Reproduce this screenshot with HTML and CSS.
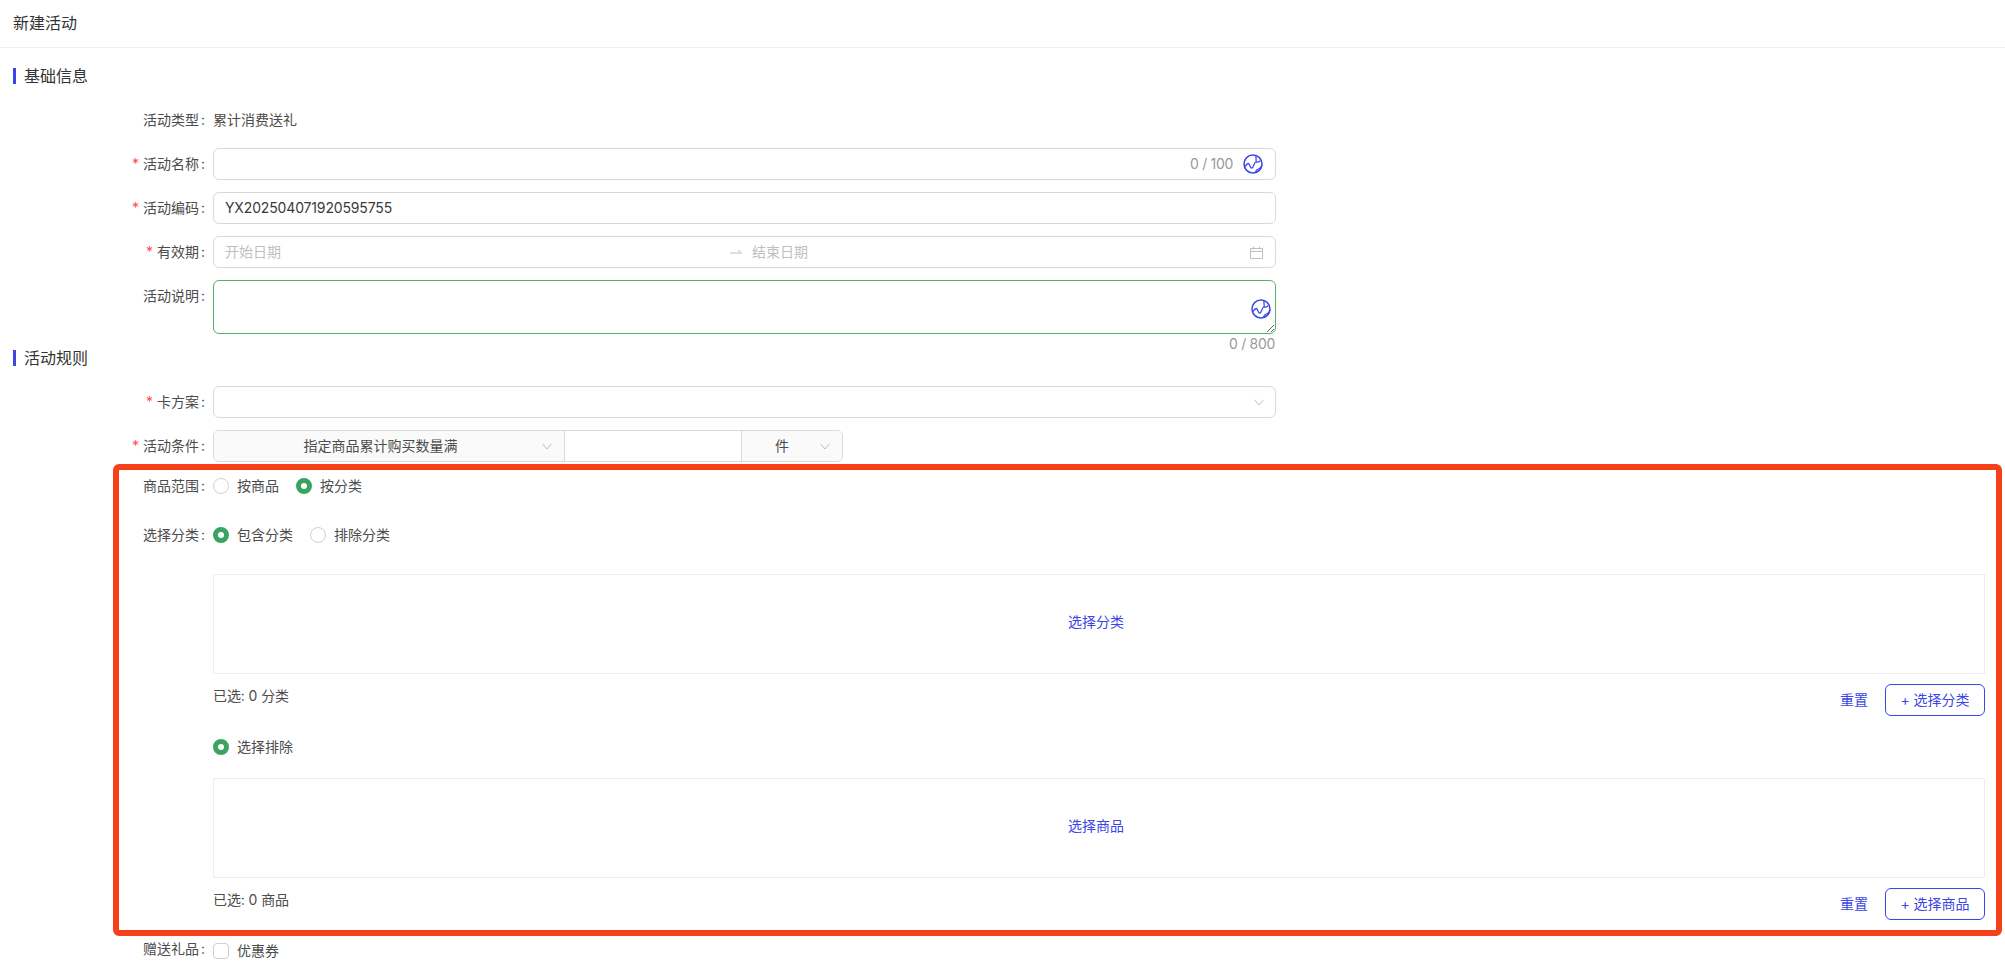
FILE: index.html
```html
<!DOCTYPE html>
<html lang="zh-CN">
<head>
<meta charset="utf-8">
<title>新建活动</title>
<link rel="stylesheet" href="styles.css">
</head>
<body>
<svg class="defs" width="0" height="0" aria-hidden="true">
  <symbol id="globe" viewBox="0 0 20 20">
    <circle cx="10" cy="10" r="9" fill="none" stroke="currentColor" stroke-width="1.5"/>
    <path d="M1.5 13C3 11 4 9.500 5.300 9.500c1.700 0 1.500 5 3.500 4.500 2.200-.5 1.700-5 3.900-6 1.300-1 -.2-4 .3-6.500M12.700 8c1.500.3 3.100 0 4.600-1.300" fill="none" stroke="currentColor" stroke-width="1.300"/>
    <path d="M12.800 18.600c-.3-2.100 1.200-3.100 2.700-3.600 1.500-.5 3-1.500 3.300-4" fill="none" stroke="currentColor" stroke-width="1.300"/>
  </symbol>
  <symbol id="chev" viewBox="0 0 10 7">
    <path d="M.6.8 5 6 9.400.8" fill="none" stroke="currentColor" stroke-width="1"/>
  </symbol>
</svg>

<header class="page-head">新建活动</header>

<main class="form">
  <h2 class="sec-title sec-first">基础信息</h2>

  <div class="row">
    <div class="label">活动类型<span class="colon">:</span></div>
    <div class="plain">累计消费送礼</div>
  </div>
  <div class="row">
    <div class="label"><span class="req">*</span>活动名称<span class="colon">:</span></div>
    <div class="input">
      <span class="grow"></span>
      <span class="count">0 / 100</span>
      <svg class="globe"><use href="#globe"/></svg>
    </div>
  </div>
  <div class="row">
    <div class="label"><span class="req">*</span>活动编码<span class="colon">:</span></div>
    <div class="input"><span class="grow value">YX202504071920595755</span></div>
  </div>
  <div class="row">
    <div class="label"><span class="req">*</span>有效期<span class="colon">:</span></div>
    <div class="input">
      <span class="date-start ph">开始日期</span>
      <svg class="date-arrow" viewBox="0 0 12 6"><path d="M0 4h11.500L8 1" fill="none" stroke="currentColor" stroke-width="1"/></svg>
      <span class="grow ph">结束日期</span>
      <svg class="cal" viewBox="0 0 13 13"><path d="M.5 2.500h12v10H.5zM.5 5.500h12M3.500.5v3M9.500.5v3" fill="none" stroke="currentColor" stroke-width="1"/></svg>
    </div>
  </div>
  <div class="row row-area">
    <div class="label">活动说明<span class="colon">:</span></div>
    <div class="area-wrap">
      <textarea class="area" aria-label="活动说明"></textarea>
      <svg class="globe globe-area"><use href="#globe"/></svg>
      <span class="count count-area">0 / 800</span>
    </div>
  </div>

  <h2 class="sec-title">活动规则</h2>

  <div class="row">
    <div class="label"><span class="req">*</span>卡方案<span class="colon">:</span></div>
    <div class="input input-select">
      <span class="grow"></span>
      <svg class="chev"><use href="#chev"/></svg>
    </div>
  </div>
  <div class="row row-tight">
    <div class="label"><span class="req">*</span>活动条件<span class="colon">:</span></div>
    <div class="group">
      <div class="addon addon-cond"><span class="addon-text">指定商品累计购买数量满</span><svg class="chev"><use href="#chev"/></svg></div>
      <div class="group-input"></div>
      <div class="addon addon-unit"><span class="addon-text">件</span><svg class="chev"><use href="#chev"/></svg></div>
    </div>
  </div>

  <section class="highlight">
    <div class="row row-radio">
      <div class="label">商品范围<span class="colon">:</span></div>
      <div class="radios">
        <span class="opt"><i class="radio"></i>按商品</span>
        <span class="opt"><i class="radio on"></i>按分类</span>
      </div>
    </div>
    <div class="row row-radio row-second">
      <div class="label">选择分类<span class="colon">:</span></div>
      <div class="radios">
        <span class="opt"><i class="radio on"></i>包含分类</span>
        <span class="opt"><i class="radio"></i>排除分类</span>
      </div>
    </div>

    <div class="sub">
      <div class="pick">选择分类</div>
      <div class="pick-foot">
        <span class="picked">已选: 0 分类</span>
        <span class="foot-actions"><span class="link">重置</span><span class="btn">+ 选择分类</span></span>
      </div>
      <div class="exclude"><span class="opt"><i class="radio on"></i>选择排除</span></div>
      <div class="pick">选择商品</div>
      <div class="pick-foot">
        <span class="picked">已选: 0 商品</span>
        <span class="foot-actions"><span class="link">重置</span><span class="btn">+ 选择商品</span></span>
      </div>
    </div>
  </section>

  <div class="row row-gift">
    <div class="label">赠送礼品<span class="colon">:</span></div>
    <div class="gift"><i class="check"></i>优惠券</div>
  </div>
</main>
</body>
</html>
```

FILE: styles.css
```css
* { box-sizing: border-box; }
html, body { margin: 0; padding: 0; }
body {
  width: 2005px;
  height: 979px;
  overflow: hidden;
  background: #fff;
  color: #444;
  font-family: "Inter", "Noto Sans CJK SC", sans-serif;
  font-size: 14px;
  line-height: 22px;
}
.defs { position: absolute; }

.page-head {
  height: 48px;
  padding-left: 13px;
  border-bottom: 1px solid #f0f0f0;
  font-size: 16px;
  line-height: 46px;
  color: #333;
}

.sec-title {
  margin: 0 0 20px 13px;
  padding-left: 8px;
  height: 16px;
  border-left: 3px solid #3a46e6;
  font-size: 16px;
  font-weight: 400;
  line-height: 16px;
  color: #333;
}
.sec-first { margin-top: 20px; }

.row {
  display: flex;
  align-items: center;
  height: 32px;
  margin-bottom: 12px;
}
.row-tight { margin-bottom: 2px; }
.label {
  flex: none;
  width: 205px;
  margin-right: 8px;
  text-align: right;
  white-space: nowrap;
  color: #4c4c4c;
}
.colon { margin-left: 2px; }
.req {
  margin-right: 4px;
  color: #ff4d4f;
  font-size: 14px;
}
.plain { color: #4c4c4c; }

.input {
  display: flex;
  align-items: center;
  width: 1063px;
  height: 32px;
  padding: 0 12px 0 11px;
  border: 1px solid #d9d9d9;
  border-radius: 6px;
  background: #fff;
}
.input-select { padding-right: 11px; }
.grow { flex: 1; }
.value { color: #3a3a3a; letter-spacing: -0.15px; }
.ph { color: #bfbfbf; }
.count { color: #999; letter-spacing: -0.3px; }
.globe {
  width: 20px;
  height: 20px;
  margin-left: 10px;
  color: #3a46e6;
}
.date-start { width: 505px; flex: none; }
.date-arrow {
  flex: none;
  width: 12px;
  height: 6px;
  margin-right: 10px;
  color: #bfbfbf;
}
.cal {
  flex: none;
  width: 13px;
  height: 13px;
  color: #bfbfbf;
}

.row-area {
  align-items: flex-start;
  height: 54px;
  margin-bottom: 16px;
}
.row-area .label { line-height: 32px; }
.area-wrap {
  position: relative;
  width: 1063px;
  height: 54px;
}
.area {
  display: block;
  width: 100%;
  height: 100%;
  padding: 4px 11px;
  border: 1px solid #55b070;
  border-radius: 6px;
  outline: none;
  resize: vertical;
  font: inherit;
}
.globe-area {
  position: absolute;
  top: 19px;
  right: 5px;
  margin: 0;
}
.count-area {
  position: absolute;
  top: 53px;
  right: 1px;
}

.chev {
  flex: none;
  width: 10px;
  height: 7px;
  color: #bdbdbd;
}
.group {
  display: flex;
  width: 630px;
  height: 32px;
  border: 1px solid #d9d9d9;
  border-radius: 6px;
  overflow: hidden;
}
.addon {
  display: flex;
  align-items: center;
  background: #fafafa;
  color: #4c4c4c;
}
.addon-text { flex: 1; text-align: center; }
.addon-cond { width: 351px; padding-right: 12px; border-right: 1px solid #d9d9d9; }
.addon-cond .addon-text { padding-left: 5px; }
.group-input { flex: 1; }
.addon-unit { width: 101px; padding-right: 12px; border-left: 1px solid #d9d9d9; }
.addon-unit .addon-text { padding-left: 2px; }

.highlight {
  width: 1889px;
  height: 472px;
  margin-left: 113px;
  padding: 0 11px 0 0;
  border: 6px solid #f5401a;
  border-radius: 6px;
}
.highlight .label { width: 86px; }
.row-radio { margin-bottom: 17px; }
.row-second { margin-bottom: 23px; }
.radios { display: flex; gap: 17px; }
.opt {
  display: inline-flex;
  align-items: center;
  color: #4c4c4c;
}
.radio {
  flex: none;
  width: 16px;
  height: 16px;
  margin-right: 8px;
  border: 1px solid #d0d0d0;
  border-radius: 50%;
  background: #fff;
}
.radio.on { border: 5px solid #3aa35f; }

.sub { margin-left: 94px; }
.pick {
  display: flex;
  align-items: center;
  justify-content: center;
  height: 100px;
  padding: 0 6px 4px 0;
  border: 1px solid #ebebf2;
  color: #3a46e6;
}
.pick-foot {
  display: flex;
  justify-content: space-between;
  align-items: flex-start;
  margin-top: 10px;
}
.picked { padding-top: 1px; color: #4c4c4c; letter-spacing: -0.1px; }
.foot-actions {
  display: flex;
  align-items: center;
  gap: 17px;
}
.link { color: #3a46e6; }
.btn {
  width: 100px;
  height: 32px;
  border: 1px solid #3a46e6;
  border-radius: 6px;
  color: #3a46e6;
  line-height: 30px;
  text-align: center;
}
.exclude {
  display: flex;
  align-items: center;
  height: 32px;
  margin: 15px 0;
}

.row-gift {
  align-items: flex-start;
  height: 30px;
  margin: 0;
}
.row-gift .label { line-height: 26px; }
.gift {
  display: flex;
  align-items: center;
  height: 30px;
  color: #4c4c4c;
}
.check {
  flex: none;
  width: 16px;
  height: 16px;
  margin-right: 8px;
  border: 1px solid #d0d0d0;
  border-radius: 4px;
  background: #fff;
}
```
